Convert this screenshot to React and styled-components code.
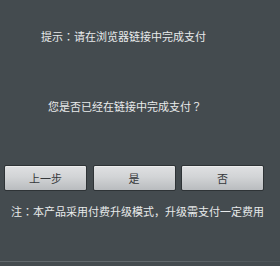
import React from "react";
import styled, { createGlobalStyle } from "styled-components";

const Global = createGlobalStyle`
  html, body { margin: 0; padding: 0; background: #444b4f; }
  #root { width: 280px; height: 266px; }
`;

const Dialog = styled.div`
  width: 280px;
  height: 266px;
  box-sizing: border-box;
  background: #444b4f;
  padding-top: 31px;
  display: flex;
  flex-direction: column;
  font-family: "Noto Sans CJK SC", "Noto Sans", sans-serif;
  font-size: 11px;
  color: #e8eaeb;
  overflow: hidden;
`;

const Line = styled.div`
  line-height: 11px;
  height: 11px;
  white-space: nowrap;
  padding-left: ${(p) => p.$indent}px;
  margin-top: ${(p) => p.$top || 0}px;
`;

const Punct = styled.span`
  font-family: "Noto Sans CJK JP", "Noto Sans CJK SC", sans-serif;
`;

const ButtonRow = styled.div`
  display: flex;
  gap: 5.5px;
  padding-left: 4px;
  margin-top: 53px;
`;

const Button = styled.button`
  width: 83px;
  height: 26px;
  box-sizing: border-box;
  border: 1px solid #2e3336;
  border-radius: 2px;
  background: linear-gradient(to bottom, #dfe0e2 0%, #d2d4d6 45%, #b9bcbf 100%);
  box-shadow: inset 0 1px 0 #eceded;
  font-family: "Noto Sans CJK SC", "Noto Sans", sans-serif;
  font-size: 11px;
  line-height: 11px;
  color: #35383b;
  padding: 0;
  display: flex;
  align-items: center;
  justify-content: center;
`;

const Divider = styled.div`
  height: 1px;
  margin-top: 44px;
  background: linear-gradient(to right, #61686c 0%, #61686c 60%, #4b5256 100%);
`;

export default function App() {
  return (
    <>
      <Global />
      <Dialog>
        <Line $indent={41}>提示<Punct>：</Punct>请在浏览器链接中完成支付</Line>
        <Line $indent={48} $top={59}>您是否已经在链接中完成支付<Punct>？</Punct></Line>
        <ButtonRow>
          <Button>上一步</Button>
          <Button>是</Button>
          <Button>否</Button>
        </ButtonRow>
        <Line $indent={11} $top={15}>
          注<Punct>：</Punct>本产品采用付费升级模式<Punct>，</Punct>升级需支付一定费用
        </Line>
        <Divider />
      </Dialog>
    </>
  );
}
